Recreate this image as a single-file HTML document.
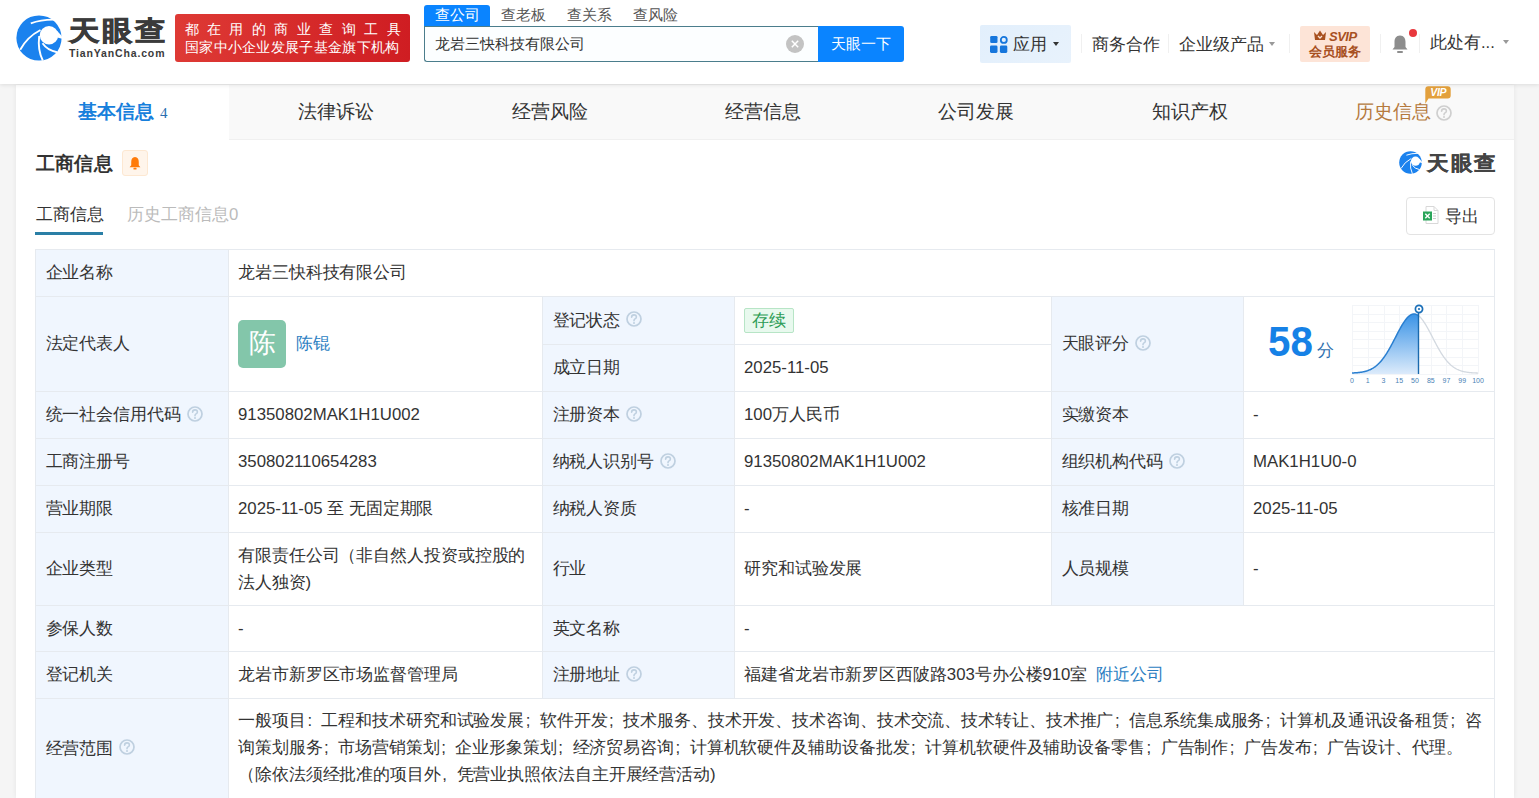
<!DOCTYPE html>
<html><head><meta charset="utf-8"><style>
*{box-sizing:border-box;margin:0;padding:0}
html,body{width:1539px;height:798px;overflow:hidden}
body{background:#f5f5f5;font-family:"Liberation Sans",sans-serif;color:#333;position:relative}
.abs{position:absolute;white-space:nowrap}
#hdr{left:0;top:0;width:1539px;height:84px;background:#fff;box-shadow:0 1px 4px rgba(0,0,0,.10);z-index:5}
.logo-t{left:68.5px;top:13px;font-size:27px;font-weight:bold;color:#3b3b3b;letter-spacing:2px;-webkit-text-stroke:0.7px #3b3b3b;transform:scaleX(1.13);transform-origin:0 0}
.logo-s{left:69px;top:46.5px;font-size:10.5px;font-weight:bold;color:#3b3b3b;letter-spacing:0.85px}
.banner{left:175px;top:14px;width:235px;height:48px;border-radius:3px;background:linear-gradient(90deg,#de3a35,#cf1d22);color:#fff}
.banner .l1{position:absolute;left:9.5px;top:6.5px;font-size:14px;letter-spacing:8.45px}
.banner .l2{position:absolute;left:10px;top:24px;font-size:14.4px;letter-spacing:0.3px}
.stab{top:5px;height:21px;width:66px;text-align:center;font-size:14.5px;line-height:21px;color:#555}
.stab.on{background:#0a84ff;color:#fff;border-radius:3px 3px 0 0}
.sinput{left:424px;top:26px;width:395px;height:36px;border:1px solid #4b7d8c;border-right:none;border-radius:0 0 0 3px;background:#fcfeff}
.sinput span{position:absolute;left:10px;top:8px;font-size:14.5px;color:#333}
.sbtn{left:818px;top:26px;width:86px;height:36px;background:#0a84ff;border-radius:0 3px 3px 0;color:#fff;font-size:14.5px;line-height:37px;text-align:center}
.nav{top:33.5px;font-size:16.5px;color:#333;line-height:20px}
.sep{top:34px;width:1px;height:19px;background:#f0f0f0}
.caret{width:0;height:0;border-left:3.5px solid transparent;border-right:3.5px solid transparent;border-top:4px solid #333}
#card{left:16px;top:85px;width:1498px;height:713px;background:#fff;box-shadow:0 0 5px rgba(0,0,0,.07)}
#tabs{left:16px;top:85px;width:1498px;height:55px;background:#f9f9f9;border-bottom:1px solid #f0f0f0}
.tab{top:0;height:55px;width:213.43px;text-align:center;font-size:19px;line-height:53px;color:#333}
.tab.on{background:#fff;color:#1780dc;font-weight:bold}
.cell{position:absolute;border-left:1px solid #e6eaef;border-top:1px solid #e6eaef;display:flex;align-items:center;padding-left:9px;padding-bottom:1px;font-size:16.8px;color:#333;line-height:27px}
.lab{background:#f0f6fe;padding-left:9.5px}
.q{display:inline-block;width:16px;height:16px;margin-left:6px;position:relative;flex:none;vertical-align:-1.5px}
.q svg{display:block}
.avatar{width:48px;height:48px;margin-left:0px;margin-top:1px;border-radius:5px;background:#83c6aa;color:#fff;font-size:27px;text-align:center;line-height:46px;flex:none}
.tag{display:inline-block;height:25px;line-height:22px;padding:0 7px;border:1px solid #b7e5c6;background:#e8f9ee;color:#2c9c55;border-radius:2px;font-size:16.5px}
.c{letter-spacing:-0.1px}
.sc{display:inline-block;width:15.75px;text-align:left;padding-left:1.5px}
.sc2{display:inline-block;width:15.75px;text-align:left;padding-left:1.8px}
</style></head><body>
<div id="hdr" class="abs">
<svg class="abs" style="left:16px;top:15px" width="46" height="46" viewBox="0 0 46 46">
<circle cx="23" cy="23" r="22.6" fill="#1b82ee"/>
<circle cx="33" cy="20.3" r="9.2" fill="#fff"/>
<path d="M33 20.3 L40.8 15.6 L46.5 21.8 L46.5 24 Z" fill="#fff"/>
<path d="M14.8 8.4 Q25 4.4 38.5 4.6" stroke="#fff" stroke-width="1.9" fill="none"/>
<path d="M4.2 34.8 Q11 22 24.5 15" stroke="#fff" stroke-width="1.9" fill="none"/>
<path d="M23.2 21 Q21.5 35 26.8 45.5" stroke="#fff" stroke-width="1.9" fill="none"/>
<path d="M26.5 28.3 Q31.5 35.5 41 37.2" stroke="#fff" stroke-width="1.9" fill="none"/>
</svg>
<div class="abs logo-t">天眼查</div>
<div class="abs logo-s">TianYanCha.com</div>
<div class="abs banner"><div class="l1">都在用的商业查询工具</div><div class="l2">国家中小企业发展子基金旗下机构</div></div>
<div class="abs stab on" style="left:424px">查公司</div>
<div class="abs stab" style="left:490px">查老板</div>
<div class="abs stab" style="left:556px">查关系</div>
<div class="abs stab" style="left:622px">查风险</div>
<div class="abs sinput"><span>龙岩三快科技有限公司</span></div>
<svg class="abs" style="left:786px;top:35px" width="18" height="18" viewBox="0 0 18 18"><circle cx="9" cy="9" r="9" fill="#c3c3c3"/><path d="M5.8 5.8 L12.2 12.2 M12.2 5.8 L5.8 12.2" stroke="#fff" stroke-width="1.5"/></svg>
<div class="abs sbtn">天眼一下</div>
<div class="abs" style="left:980px;top:25px;width:91px;height:38px;background:linear-gradient(135deg,#e2effc,#e8f2fc);border-radius:2px"></div>
<svg class="abs" style="left:990px;top:36px" width="18" height="17" viewBox="0 0 18 17">
<rect x="0.2" y="0" width="7.3" height="7" rx="1.3" fill="#1676dc"/>
<circle cx="13.8" cy="3.9" r="3.0" fill="none" stroke="#1676dc" stroke-width="1.8"/>
<rect x="0" y="9.6" width="7.5" height="7.3" rx="1.3" fill="#1676dc"/>
<rect x="9.9" y="9.6" width="7.4" height="7.3" rx="1.3" fill="#1676dc"/>
<div class="abs nav" style="left:1013px">应用</div>
<div class="abs caret" style="left:1053px;top:42px"></div>
<div class="abs sep" style="left:1081px"></div>
<div class="abs nav" style="left:1092px">商务合作</div>
<div class="abs sep" style="left:1168px"></div>
<div class="abs nav" style="left:1179px">企业级产品</div>
<div class="abs caret" style="left:1269px;top:42px;border-top-color:#999"></div>
<div class="abs sep" style="left:1289px"></div>
<div class="abs" style="left:1300px;top:26px;width:70px;height:36px;background:#fde4d7;border-radius:2px"></div>
<svg class="abs" style="left:1313px;top:30px" width="14" height="11" viewBox="0 0 14 11">
<path d="M1 2 L4 5 L7 0.5 L10 5 L13 2 L12 10 L2 10 Z" fill="#a8501f"/>
<path d="M5 6 L7 8 L9 6" stroke="#fde4d7" stroke-width="1.3" fill="none"/></svg>
<div class="abs" style="left:1329px;top:29px;font-size:13px;font-weight:bold;font-style:italic;color:#a8501f;letter-spacing:-0.5px">SVIP</div>
<div class="abs" style="left:1309px;top:44px;font-size:12.8px;font-weight:bold;color:#a8501f">会员服务</div>
<div class="abs sep" style="left:1380px"></div>
<svg class="abs" style="left:1391px;top:34px" width="18" height="20" viewBox="0 0 18 20">
<path d="M9 1.5 C5 1.5 3.5 4.5 3.5 8 L3.5 13 L1.5 15.5 L16.5 15.5 L14.5 13 L14.5 8 C14.5 4.5 13 1.5 9 1.5 Z" fill="#8d8d8d"/>
<rect x="6" y="17" width="6" height="2" rx="1" fill="#8d8d8d"/></svg>
<div class="abs" style="left:1409px;top:29px;width:8px;height:8px;border-radius:50%;background:#e8383d"></div>
<div class="abs sep" style="left:1419px"></div>
<div class="abs nav" style="left:1430px;top:32px">此处有...</div>
<div class="abs caret" style="left:1502.5px;top:40px;border-top-color:#999"></div>
</div>
<div id="card" class="abs"></div>
<div id="tabs" class="abs">
<div class="abs tab on" style="left:0;width:213.43px">基本信息<span style="font-family:'Liberation Serif',serif;font-weight:normal;font-size:15px;color:#2a6db0;margin-left:6px">4</span></div>
<div class="abs tab" style="left:213.43px;width:213.43px">法律诉讼</div>
<div class="abs tab" style="left:426.86px;width:213.43px">经营风险</div>
<div class="abs tab" style="left:640.29px;width:213.43px">经营信息</div>
<div class="abs tab" style="left:853.71px;width:213.43px">公司发展</div>
<div class="abs tab" style="left:1067.14px;width:213.43px">知识产权</div>
<div class="abs tab" style="left:1280.57px;width:213.43px;color:#b57a3e">历史信息<span class="q" style="margin-left:5px;top:2px;display:inline-block;vertical-align:-1px"><svg width="16" height="16" viewBox="0 0 16 16"><circle cx="8" cy="8" r="7" fill="none" stroke="#cfcfcf" stroke-width="1.7"/><path d="M5.6 6.3 Q5.6 3.9 8 3.9 Q10.4 3.9 10.4 6 Q10.4 7.2 9 7.9 Q8 8.4 8 9.7" fill="none" stroke="#cfcfcf" stroke-width="1.6" stroke-linecap="round"/><circle cx="8" cy="11.9" r="1" fill="#cfcfcf"/></svg></span></div>
<svg class="abs" style="left:1405px;top:1px" width="31" height="19" viewBox="0 0 31 19"><path d="M5.3 0.2 L26.7 0.2 Q29.7 0.2 29.7 3.2 L29.7 9.5 Q29.7 12.5 26.7 12.5 L7.5 12.5 L4.3 17.8 L4.3 3.2 Q4.3 0.2 7.3 0.2 Z" fill="#e3a03c"/><text x="17.2" y="10.2" font-family="Liberation Sans" font-weight="bold" font-style="italic" font-size="10.5" fill="#fff" text-anchor="middle" letter-spacing="-0.3">VIP</text></svg>
</div>
<div class="abs" style="left:36px;top:151px;font-size:19px;font-weight:bold;color:#333;letter-spacing:0.2px">工商信息</div>
<div class="abs" style="left:122px;top:150px;width:26px;height:26px;background:#fff5eb;border:1px solid #fde8d2;border-radius:3px"></div>
<svg class="abs" style="left:127.5px;top:155.5px" width="14" height="14" viewBox="0 0 13 13"><path d="M6.5 1 C4 1 3 3 3 5.5 L3 8.5 L1.5 10.5 L11.5 10.5 L10 8.5 L10 5.5 C10 3 9 1 6.5 1Z" fill="#ff7b0a"/><rect x="5" y="11" width="3" height="1.6" rx=".8" fill="#ff7b0a"/></svg>
<svg class="abs" style="left:1399px;top:151px" width="23" height="23" viewBox="0 0 46 46">
<circle cx="23" cy="23" r="22.6" fill="#1b82ee"/>
<circle cx="33" cy="20.3" r="9.2" fill="#fff"/>
<path d="M33 20.3 L40.8 15.6 L46.5 21.8 L46.5 24 Z" fill="#fff"/>
<path d="M14.8 8.4 Q25 4.4 38.5 4.6" stroke="#fff" stroke-width="1.9" fill="none"/>
<path d="M4.2 34.8 Q11 22 24.5 15" stroke="#fff" stroke-width="1.9" fill="none"/>
<path d="M23.2 21 Q21.5 35 26.8 45.5" stroke="#fff" stroke-width="1.9" fill="none"/>
<path d="M26.5 28.3 Q31.5 35.5 41 37.2" stroke="#fff" stroke-width="1.9" fill="none"/>
</svg>
<div class="abs" style="left:1426.5px;top:149.5px;font-size:20px;font-weight:bold;color:#444;letter-spacing:1.8px;-webkit-text-stroke:0.3px #444;transform:scaleX(1.08);transform-origin:0 0">天眼查</div>
<div class="abs" style="left:36px;top:203px;font-size:16.8px;color:#333">工商信息</div>
<div class="abs" style="left:35px;top:232px;width:68px;height:3px;background:#2a7fa6"></div>
<div class="abs" style="left:127px;top:203px;font-size:16.8px;color:#bbb">历史工商信息0</div>
<div class="abs" style="left:1406px;top:197px;width:89px;height:38px;border:1px solid #e3e3e3;border-radius:4px;background:#fff"></div>
<svg class="abs" style="left:1422px;top:206px" width="17" height="18" viewBox="0 0 17 18">
<path d="M4 0.5 L12 0.5 L16 4.5 L16 17.5 L4 17.5 Z" fill="#fff" stroke="#d8d8d8"/>
<path d="M12 0.5 L12 4.5 L16 4.5" fill="none" stroke="#d8d8d8"/>
<rect x="11" y="7" width="3" height="1" fill="#ccc"/><rect x="11" y="9.5" width="3" height="1" fill="#ccc"/><rect x="11" y="12" width="3" height="1" fill="#ccc"/>
<rect x="1" y="5.5" width="9" height="9" fill="#2aa55a"/>
<path d="M3.3 7.8 L7.7 12.2 M7.7 7.8 L3.3 12.2" stroke="#fff" stroke-width="1.4"/>
</svg>
<div class="abs" style="left:1445px;top:205px;font-size:16.8px;color:#333">导出</div>

<div class="cell lab" style="left:35px;top:249px;width:193px;height:47px;"><div style="display:block;align-items:center"><span class="c">企业名称</span></div></div>
<div class="cell" style="left:228px;top:249px;width:1266px;height:47px;"><div style="display:block;align-items:center"><span class="c">龙岩三快科技有限公司</span></div></div>
<div class="cell lab" style="left:35px;top:296px;width:193px;height:95px;"><div style="display:block;align-items:center"><span class="c">法定代表人</span></div></div>
<div class="cell" style="left:228px;top:296px;width:314px;height:95px;"><div style="display:flex;align-items:center"><div class="avatar"><span class="c">陈</span></div><span style="color:#2b7ec2;margin-left:10px"><span class="c">陈锟</span></span></div></div>
<div class="cell lab" style="left:542px;top:296px;width:192px;height:48px;"><div style="display:block;align-items:center"><span class="c">登记状态</span><span class="q"><svg width="16" height="16" viewBox="0 0 16 16"><circle cx="8" cy="8" r="7" fill="none" stroke="#bfd0e0" stroke-width="1.7"/><path d="M5.6 6.3 Q5.6 3.9 8 3.9 Q10.4 3.9 10.4 6 Q10.4 7.2 9 7.9 Q8 8.4 8 9.7" fill="none" stroke="#bfd0e0" stroke-width="1.6" stroke-linecap="round"/><circle cx="8" cy="11.9" r="1" fill="#bfd0e0"/></svg></span></div></div>
<div class="cell" style="left:734px;top:296px;width:317px;height:48px;"><div style="display:block;align-items:center"><span class="tag"><span class="c">存续</span></span></div></div>
<div class="cell lab" style="left:542px;top:344px;width:192px;height:47px;"><div style="display:block;align-items:center"><span class="c">成立日期</span></div></div>
<div class="cell" style="left:734px;top:344px;width:317px;height:47px;"><div style="display:block;align-items:center">2025-11-05</div></div>
<div class="cell lab" style="left:1051px;top:296px;width:192px;height:95px;"><div style="display:block;align-items:center"><span class="c">天眼评分</span><span class="q"><svg width="16" height="16" viewBox="0 0 16 16"><circle cx="8" cy="8" r="7" fill="none" stroke="#bfd0e0" stroke-width="1.7"/><path d="M5.6 6.3 Q5.6 3.9 8 3.9 Q10.4 3.9 10.4 6 Q10.4 7.2 9 7.9 Q8 8.4 8 9.7" fill="none" stroke="#bfd0e0" stroke-width="1.6" stroke-linecap="round"/><circle cx="8" cy="11.9" r="1" fill="#bfd0e0"/></svg></span></div></div>
<div class="cell" style="left:1243px;top:296px;width:251px;height:95px;"><div style="display:block;align-items:center"></div></div>
<div class="cell lab" style="left:35px;top:391px;width:193px;height:47px;"><div style="display:block;align-items:center"><span class="c">统一社会信用代码</span><span class="q"><svg width="16" height="16" viewBox="0 0 16 16"><circle cx="8" cy="8" r="7" fill="none" stroke="#bfd0e0" stroke-width="1.7"/><path d="M5.6 6.3 Q5.6 3.9 8 3.9 Q10.4 3.9 10.4 6 Q10.4 7.2 9 7.9 Q8 8.4 8 9.7" fill="none" stroke="#bfd0e0" stroke-width="1.6" stroke-linecap="round"/><circle cx="8" cy="11.9" r="1" fill="#bfd0e0"/></svg></span></div></div>
<div class="cell" style="left:228px;top:391px;width:314px;height:47px;"><div style="display:block;align-items:center">91350802MAK1H1U002</div></div>
<div class="cell lab" style="left:542px;top:391px;width:192px;height:47px;"><div style="display:block;align-items:center"><span class="c">注册资本</span><span class="q"><svg width="16" height="16" viewBox="0 0 16 16"><circle cx="8" cy="8" r="7" fill="none" stroke="#bfd0e0" stroke-width="1.7"/><path d="M5.6 6.3 Q5.6 3.9 8 3.9 Q10.4 3.9 10.4 6 Q10.4 7.2 9 7.9 Q8 8.4 8 9.7" fill="none" stroke="#bfd0e0" stroke-width="1.6" stroke-linecap="round"/><circle cx="8" cy="11.9" r="1" fill="#bfd0e0"/></svg></span></div></div>
<div class="cell" style="left:734px;top:391px;width:317px;height:47px;"><div style="display:block;align-items:center">100<span class="c">万人民币</span></div></div>
<div class="cell lab" style="left:1051px;top:391px;width:192px;height:47px;"><div style="display:block;align-items:center"><span class="c">实缴资本</span></div></div>
<div class="cell" style="left:1243px;top:391px;width:251px;height:47px;"><div style="display:block;align-items:center">-</div></div>
<div class="cell lab" style="left:35px;top:438px;width:193px;height:47px;"><div style="display:block;align-items:center"><span class="c">工商注册号</span></div></div>
<div class="cell" style="left:228px;top:438px;width:314px;height:47px;"><div style="display:block;align-items:center">350802110654283</div></div>
<div class="cell lab" style="left:542px;top:438px;width:192px;height:47px;"><div style="display:block;align-items:center"><span class="c">纳税人识别号</span><span class="q"><svg width="16" height="16" viewBox="0 0 16 16"><circle cx="8" cy="8" r="7" fill="none" stroke="#bfd0e0" stroke-width="1.7"/><path d="M5.6 6.3 Q5.6 3.9 8 3.9 Q10.4 3.9 10.4 6 Q10.4 7.2 9 7.9 Q8 8.4 8 9.7" fill="none" stroke="#bfd0e0" stroke-width="1.6" stroke-linecap="round"/><circle cx="8" cy="11.9" r="1" fill="#bfd0e0"/></svg></span></div></div>
<div class="cell" style="left:734px;top:438px;width:317px;height:47px;"><div style="display:block;align-items:center">91350802MAK1H1U002</div></div>
<div class="cell lab" style="left:1051px;top:438px;width:192px;height:47px;"><div style="display:block;align-items:center"><span class="c">组织机构代码</span><span class="q"><svg width="16" height="16" viewBox="0 0 16 16"><circle cx="8" cy="8" r="7" fill="none" stroke="#bfd0e0" stroke-width="1.7"/><path d="M5.6 6.3 Q5.6 3.9 8 3.9 Q10.4 3.9 10.4 6 Q10.4 7.2 9 7.9 Q8 8.4 8 9.7" fill="none" stroke="#bfd0e0" stroke-width="1.6" stroke-linecap="round"/><circle cx="8" cy="11.9" r="1" fill="#bfd0e0"/></svg></span></div></div>
<div class="cell" style="left:1243px;top:438px;width:251px;height:47px;"><div style="display:block;align-items:center">MAK1H1U0-0</div></div>
<div class="cell lab" style="left:35px;top:485px;width:193px;height:47px;"><div style="display:block;align-items:center"><span class="c">营业期限</span></div></div>
<div class="cell" style="left:228px;top:485px;width:314px;height:47px;"><div style="display:block;align-items:center">2025-11-05 <span class="c">至</span> <span class="c">无固定期限</span></div></div>
<div class="cell lab" style="left:542px;top:485px;width:192px;height:47px;"><div style="display:block;align-items:center"><span class="c">纳税人资质</span></div></div>
<div class="cell" style="left:734px;top:485px;width:317px;height:47px;"><div style="display:block;align-items:center">-</div></div>
<div class="cell lab" style="left:1051px;top:485px;width:192px;height:47px;"><div style="display:block;align-items:center"><span class="c">核准日期</span></div></div>
<div class="cell" style="left:1243px;top:485px;width:251px;height:47px;"><div style="display:block;align-items:center">2025-11-05</div></div>
<div class="cell lab" style="left:35px;top:532px;width:193px;height:73px;"><div style="display:block;align-items:center"><span class="c">企业类型</span></div></div>
<div class="cell" style="left:228px;top:532px;width:314px;height:73px;"><div style="display:block;align-items:center"><div><span class="c">有限责任公司（非自然人投资或控股的</span><br><span class="c">法人独资</span>)</div></div></div>
<div class="cell lab" style="left:542px;top:532px;width:192px;height:73px;"><div style="display:block;align-items:center"><span class="c">行业</span></div></div>
<div class="cell" style="left:734px;top:532px;width:317px;height:73px;"><div style="display:block;align-items:center"><span class="c">研究和试验发展</span></div></div>
<div class="cell lab" style="left:1051px;top:532px;width:192px;height:73px;"><div style="display:block;align-items:center"><span class="c">人员规模</span></div></div>
<div class="cell" style="left:1243px;top:532px;width:251px;height:73px;"><div style="display:block;align-items:center">-</div></div>
<div class="cell lab" style="left:35px;top:605px;width:193px;height:46px;"><div style="display:block;align-items:center"><span class="c">参保人数</span></div></div>
<div class="cell" style="left:228px;top:605px;width:314px;height:46px;"><div style="display:block;align-items:center">-</div></div>
<div class="cell lab" style="left:542px;top:605px;width:192px;height:46px;"><div style="display:block;align-items:center"><span class="c">英文名称</span></div></div>
<div class="cell" style="left:734px;top:605px;width:760px;height:46px;"><div style="display:block;align-items:center">-</div></div>
<div class="cell lab" style="left:35px;top:651px;width:193px;height:47px;"><div style="display:block;align-items:center"><span class="c">登记机关</span></div></div>
<div class="cell" style="left:228px;top:651px;width:314px;height:47px;"><div style="display:block;align-items:center"><span class="c">龙岩市新罗区市场监督管理局</span></div></div>
<div class="cell lab" style="left:542px;top:651px;width:192px;height:47px;"><div style="display:block;align-items:center"><span class="c">注册地址</span><span class="q"><svg width="16" height="16" viewBox="0 0 16 16"><circle cx="8" cy="8" r="7" fill="none" stroke="#bfd0e0" stroke-width="1.7"/><path d="M5.6 6.3 Q5.6 3.9 8 3.9 Q10.4 3.9 10.4 6 Q10.4 7.2 9 7.9 Q8 8.4 8 9.7" fill="none" stroke="#bfd0e0" stroke-width="1.6" stroke-linecap="round"/><circle cx="8" cy="11.9" r="1" fill="#bfd0e0"/></svg></span></div></div>
<div class="cell" style="left:734px;top:651px;width:760px;height:47px;"><div style="display:block;align-items:center"><span class="c">福建省龙岩市新罗区西陂路</span>303<span class="c">号办公楼</span>910<span class="c">室</span><span style="color:#2b7ec2;margin-left:9px"><span class="c">附近公司</span></span></div></div>
<div class="cell lab" style="left:35px;top:698px;width:193px;height:100px;"><div style="display:block;align-items:center"><span class="c">经营范围</span><span class="q"><svg width="16" height="16" viewBox="0 0 16 16"><circle cx="8" cy="8" r="7" fill="none" stroke="#bfd0e0" stroke-width="1.7"/><path d="M5.6 6.3 Q5.6 3.9 8 3.9 Q10.4 3.9 10.4 6 Q10.4 7.2 9 7.9 Q8 8.4 8 9.7" fill="none" stroke="#bfd0e0" stroke-width="1.6" stroke-linecap="round"/><circle cx="8" cy="11.9" r="1" fill="#bfd0e0"/></svg></span></div></div>
<div class="cell" style="left:228px;top:698px;width:1266px;height:100px;"><div style="display:block;align-items:center"><div style="margin-top:-2px"><span class="c">一般项目</span><span class="sc2">:</span><span class="c">工程和技术研究和试验发展</span><span class="sc">;</span><span class="c">软件开发</span><span class="sc">;</span><span class="c">技术服务、技术开发、技术咨询、技术交流、技术转让、技术推广</span><span class="sc">;</span><span class="c">信息系统集成服务</span><span class="sc">;</span><span class="c">计算机及通讯设备租赁</span><span class="sc">;</span><span class="c">咨</span><br><span class="c">询策划服务</span><span class="sc">;</span><span class="c">市场营销策划</span><span class="sc">;</span><span class="c">企业形象策划</span><span class="sc">;</span><span class="c">经济贸易咨询</span><span class="sc">;</span><span class="c">计算机软硬件及辅助设备批发</span><span class="sc">;</span><span class="c">计算机软硬件及辅助设备零售</span><span class="sc">;</span><span class="c">广告制作</span><span class="sc">;</span><span class="c">广告发布</span><span class="sc">;</span><span class="c">广告设计、代理。</span><br><span class="c">（除依法须经批准的项目外</span><span class="sc">,</span><span class="c">凭营业执照依法自主开展经营活动</span>)</div></div></div>
<div class="abs" style="left:1494px;top:249px;width:1px;height:551px;background:#e6eaef"></div>
<div class="abs" style="left:1268px;top:317.5px;font-size:42px;font-weight:bold;color:#1681e6;letter-spacing:0px;transform:scaleX(0.96);transform-origin:0 0">58</div>
<div class="abs" style="left:1317px;top:339px;font-size:17px;color:#2f6fae">分</div>
<svg class="abs" style="left:1352px;top:305px" width="130" height="71" viewBox="0 0 130 71">
<line x1="0.5" y1="0" x2="0.5" y2="69" stroke="#f3f5f8" stroke-width="1"/>
<line x1="16.5" y1="0" x2="16.5" y2="69" stroke="#f3f5f8" stroke-width="1"/>
<line x1="32.5" y1="0" x2="32.5" y2="69" stroke="#f3f5f8" stroke-width="1"/>
<line x1="47.5" y1="0" x2="47.5" y2="69" stroke="#f3f5f8" stroke-width="1"/>
<line x1="63.5" y1="0" x2="63.5" y2="69" stroke="#f3f5f8" stroke-width="1"/>
<line x1="79.5" y1="0" x2="79.5" y2="69" stroke="#f3f5f8" stroke-width="1"/>
<line x1="94.5" y1="0" x2="94.5" y2="69" stroke="#f3f5f8" stroke-width="1"/>
<line x1="110.5" y1="0" x2="110.5" y2="69" stroke="#f3f5f8" stroke-width="1"/>
<line x1="126.5" y1="0" x2="126.5" y2="69" stroke="#f3f5f8" stroke-width="1"/>
<line x1="0" y1="0.5" x2="126" y2="0.5" stroke="#f3f5f8" stroke-width="1"/>
<line x1="0" y1="9.5" x2="126" y2="9.5" stroke="#f3f5f8" stroke-width="1"/>
<line x1="0" y1="17.5" x2="126" y2="17.5" stroke="#f3f5f8" stroke-width="1"/>
<line x1="0" y1="26.5" x2="126" y2="26.5" stroke="#f3f5f8" stroke-width="1"/>
<line x1="0" y1="34.5" x2="126" y2="34.5" stroke="#f3f5f8" stroke-width="1"/>
<line x1="0" y1="43.5" x2="126" y2="43.5" stroke="#f3f5f8" stroke-width="1"/>
<line x1="0" y1="52.5" x2="126" y2="52.5" stroke="#f3f5f8" stroke-width="1"/>
<line x1="0" y1="60.5" x2="126" y2="60.5" stroke="#f3f5f8" stroke-width="1"/>
<line x1="0" y1="69.5" x2="126" y2="69.5" stroke="#f3f5f8" stroke-width="1"/>
<defs><linearGradient id="g1" x1="0" y1="0" x2="0" y2="1"><stop offset="0" stop-color="#3a93e6"/><stop offset="1" stop-color="#dcebfb"/></linearGradient></defs>
<path d="M0 69 L0.0 67.98 L0.5 67.96 L1.0 67.94 L1.5 67.92 L2.0 67.89 L2.5 67.86 L3.0 67.83 L3.5 67.80 L4.0 67.77 L4.5 67.73 L5.0 67.69 L5.5 67.64 L6.0 67.59 L6.5 67.54 L7.0 67.49 L7.5 67.43 L8.0 67.36 L8.5 67.30 L9.0 67.22 L9.5 67.14 L10.0 67.06 L10.5 66.97 L11.0 66.88 L11.5 66.77 L12.0 66.66 L12.5 66.55 L13.0 66.43 L13.5 66.30 L14.0 66.16 L14.5 66.01 L15.0 65.85 L15.5 65.69 L16.0 65.51 L16.5 65.32 L17.0 65.13 L17.5 64.92 L18.0 64.70 L18.5 64.47 L19.0 64.23 L19.5 63.97 L20.0 63.70 L20.5 63.42 L21.0 63.12 L21.5 62.81 L22.0 62.48 L22.5 62.14 L23.0 61.78 L23.5 61.41 L24.0 61.02 L24.5 60.61 L25.0 60.19 L25.5 59.75 L26.0 59.29 L26.5 58.81 L27.0 58.31 L27.5 57.80 L28.0 57.26 L28.5 56.71 L29.0 56.14 L29.5 55.55 L30.0 54.94 L30.5 54.31 L31.0 53.66 L31.5 52.99 L32.0 52.30 L32.5 51.60 L33.0 50.87 L33.5 50.13 L34.0 49.37 L34.5 48.59 L35.0 47.79 L35.5 46.98 L36.0 46.15 L36.5 45.30 L37.0 44.44 L37.5 43.57 L38.0 42.68 L38.5 41.78 L39.0 40.87 L39.5 39.94 L40.0 39.01 L40.5 38.07 L41.0 37.12 L41.5 36.16 L42.0 35.20 L42.5 34.23 L43.0 33.26 L43.5 32.29 L44.0 31.32 L44.5 30.35 L45.0 29.39 L45.5 28.43 L46.0 27.47 L46.5 26.52 L47.0 25.58 L47.5 24.66 L48.0 23.74 L48.5 22.84 L49.0 21.95 L49.5 21.08 L50.0 20.23 L50.5 19.40 L51.0 18.59 L51.5 17.81 L52.0 17.05 L52.5 16.31 L53.0 15.61 L53.5 14.93 L54.0 14.28 L54.5 13.67 L55.0 13.09 L55.5 12.54 L56.0 12.03 L56.5 11.56 L57.0 11.12 L57.5 10.73 L58.0 10.37 L58.5 10.05 L59.0 9.77 L59.5 9.54 L60.0 9.34 L60.5 9.19 L61.0 9.09 L61.5 9.02 L62.0 9.00 L62.5 9.02 L63.0 9.09 L63.5 9.19 L64.0 9.34 L64.5 9.54 L65.0 9.77 L65.5 10.05 L66.0 10.37 L66.5 10.73 L66.5 69 Z" fill="url(#g1)"/>
<path d="M66.5 10.73 L67.0 11.12 L67.5 11.56 L68.0 12.03 L68.5 12.54 L69.0 13.09 L69.5 13.67 L70.0 14.28 L70.5 14.93 L71.0 15.61 L71.5 16.31 L72.0 17.05 L72.5 17.81 L73.0 18.59 L73.5 19.40 L74.0 20.23 L74.5 21.08 L75.0 21.95 L75.5 22.84 L76.0 23.74 L76.5 24.66 L77.0 25.58 L77.5 26.52 L78.0 27.47 L78.5 28.43 L79.0 29.39 L79.5 30.35 L80.0 31.32 L80.5 32.29 L81.0 33.26 L81.5 34.23 L82.0 35.20 L82.5 36.16 L83.0 37.12 L83.5 38.07 L84.0 39.01 L84.5 39.94 L85.0 40.87 L85.5 41.78 L86.0 42.68 L86.5 43.57 L87.0 44.44 L87.5 45.30 L88.0 46.15 L88.5 46.98 L89.0 47.79 L89.5 48.59 L90.0 49.37 L90.5 50.13 L91.0 50.87 L91.5 51.60 L92.0 52.30 L92.5 52.99 L93.0 53.66 L93.5 54.31 L94.0 54.94 L94.5 55.55 L95.0 56.14 L95.5 56.71 L96.0 57.26 L96.5 57.80 L97.0 58.31 L97.5 58.81 L98.0 59.29 L98.5 59.75 L99.0 60.19 L99.5 60.61 L100.0 61.02 L100.5 61.41 L101.0 61.78 L101.5 62.14 L102.0 62.48 L102.5 62.81 L103.0 63.12 L103.5 63.42 L104.0 63.70 L104.5 63.97 L105.0 64.23 L105.5 64.47 L106.0 64.70 L106.5 64.92 L107.0 65.13 L107.5 65.32 L108.0 65.51 L108.5 65.69 L109.0 65.85 L109.5 66.01 L110.0 66.16 L110.5 66.30 L111.0 66.43 L111.5 66.55 L112.0 66.66 L112.5 66.77 L113.0 66.88 L113.5 66.97 L114.0 67.06 L114.5 67.14 L115.0 67.22 L115.5 67.30 L116.0 67.36 L116.5 67.43 L117.0 67.49 L117.5 67.54 L118.0 67.59 L118.5 67.64 L119.0 67.69 L119.5 67.73 L120.0 67.77 L120.5 67.80 L121.0 67.83 L121.5 67.86 L122.0 67.89 L122.5 67.92 L123.0 67.94 L123.5 67.96 L124.0 67.98 L124.5 68.00 L125.0 68.02 L125.5 68.04 L126.0 68.05" fill="none" stroke="#d3d9e0" stroke-width="1.3"/>
<path d="M0.0 67.98 L0.5 67.96 L1.0 67.94 L1.5 67.92 L2.0 67.89 L2.5 67.86 L3.0 67.83 L3.5 67.80 L4.0 67.77 L4.5 67.73 L5.0 67.69 L5.5 67.64 L6.0 67.59 L6.5 67.54 L7.0 67.49 L7.5 67.43 L8.0 67.36 L8.5 67.30 L9.0 67.22 L9.5 67.14 L10.0 67.06 L10.5 66.97 L11.0 66.88 L11.5 66.77 L12.0 66.66 L12.5 66.55 L13.0 66.43 L13.5 66.30 L14.0 66.16 L14.5 66.01 L15.0 65.85 L15.5 65.69 L16.0 65.51 L16.5 65.32 L17.0 65.13 L17.5 64.92 L18.0 64.70 L18.5 64.47 L19.0 64.23 L19.5 63.97 L20.0 63.70 L20.5 63.42 L21.0 63.12 L21.5 62.81 L22.0 62.48 L22.5 62.14 L23.0 61.78 L23.5 61.41 L24.0 61.02 L24.5 60.61 L25.0 60.19 L25.5 59.75 L26.0 59.29 L26.5 58.81 L27.0 58.31 L27.5 57.80 L28.0 57.26 L28.5 56.71 L29.0 56.14 L29.5 55.55 L30.0 54.94 L30.5 54.31 L31.0 53.66 L31.5 52.99 L32.0 52.30 L32.5 51.60 L33.0 50.87 L33.5 50.13 L34.0 49.37 L34.5 48.59 L35.0 47.79 L35.5 46.98 L36.0 46.15 L36.5 45.30 L37.0 44.44 L37.5 43.57 L38.0 42.68 L38.5 41.78 L39.0 40.87 L39.5 39.94 L40.0 39.01 L40.5 38.07 L41.0 37.12 L41.5 36.16 L42.0 35.20 L42.5 34.23 L43.0 33.26 L43.5 32.29 L44.0 31.32 L44.5 30.35 L45.0 29.39 L45.5 28.43 L46.0 27.47 L46.5 26.52 L47.0 25.58 L47.5 24.66 L48.0 23.74 L48.5 22.84 L49.0 21.95 L49.5 21.08 L50.0 20.23 L50.5 19.40 L51.0 18.59 L51.5 17.81 L52.0 17.05 L52.5 16.31 L53.0 15.61 L53.5 14.93 L54.0 14.28 L54.5 13.67 L55.0 13.09 L55.5 12.54 L56.0 12.03 L56.5 11.56 L57.0 11.12 L57.5 10.73 L58.0 10.37 L58.5 10.05 L59.0 9.77 L59.5 9.54 L60.0 9.34 L60.5 9.19 L61.0 9.09 L61.5 9.02 L62.0 9.00 L62.5 9.02 L63.0 9.09 L63.5 9.19 L64.0 9.34 L64.5 9.54 L65.0 9.77 L65.5 10.05 L66.0 10.37 L66.5 10.73" fill="none" stroke="#2a7fd0" stroke-width="1.5"/>
<line x1="66.5" y1="4" x2="66.5" y2="69" stroke="#1a6aae" stroke-width="1.4"/>
</svg>
<svg class="abs" style="left:1413.5px;top:304px" width="10" height="10" viewBox="0 0 10 10"><circle cx="5" cy="5" r="3.6" fill="#fff" stroke="#1a6fb8" stroke-width="1.7"/><circle cx="5" cy="5" r="1.1" fill="#1a6fb8"/></svg>
<div class="abs" style="left:1342.0px;top:375.5px;width:20px;text-align:center;font-size:7px;color:#4a82b5;line-height:9px">0</div>
<div class="abs" style="left:1357.8px;top:375.5px;width:20px;text-align:center;font-size:7px;color:#4a82b5;line-height:9px">1</div>
<div class="abs" style="left:1373.5px;top:375.5px;width:20px;text-align:center;font-size:7px;color:#4a82b5;line-height:9px">3</div>
<div class="abs" style="left:1389.2px;top:375.5px;width:20px;text-align:center;font-size:7px;color:#4a82b5;line-height:9px">15</div>
<div class="abs" style="left:1405.0px;top:375.5px;width:20px;text-align:center;font-size:7px;color:#4a82b5;line-height:9px">50</div>
<div class="abs" style="left:1420.8px;top:375.5px;width:20px;text-align:center;font-size:7px;color:#4a82b5;line-height:9px">85</div>
<div class="abs" style="left:1436.5px;top:375.5px;width:20px;text-align:center;font-size:7px;color:#4a82b5;line-height:9px">97</div>
<div class="abs" style="left:1452.2px;top:375.5px;width:20px;text-align:center;font-size:7px;color:#4a82b5;line-height:9px">99</div>
<div class="abs" style="left:1468.0px;top:375.5px;width:20px;text-align:center;font-size:7px;color:#4a82b5;line-height:9px">100</div>
</body></html>
